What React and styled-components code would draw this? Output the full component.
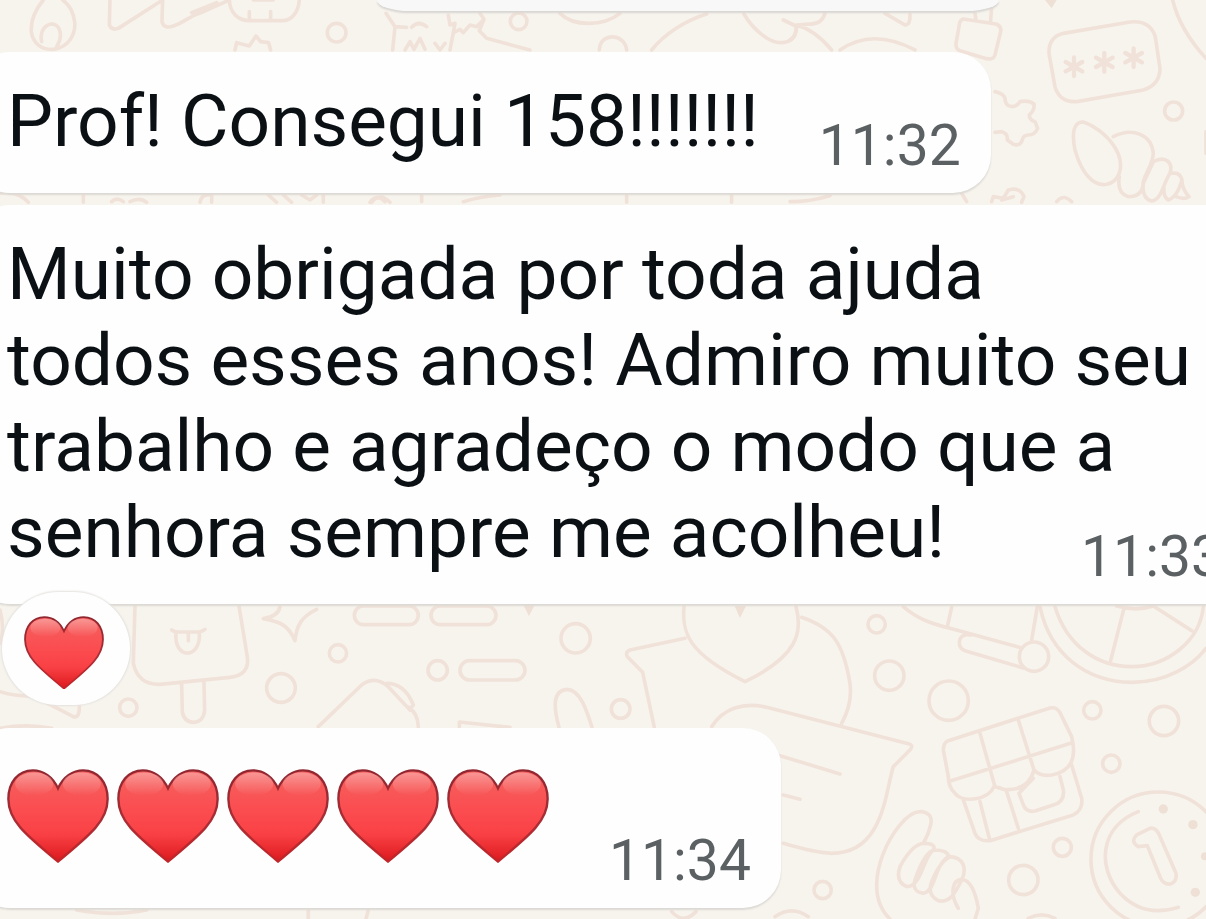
import React from "react";
import styled, { createGlobalStyle } from "styled-components";

const GlobalStyle = createGlobalStyle`
  body {
    margin: 0;
    background: #f7f4ee;
    font-family: Roboto, "Noto Sans", sans-serif;
    overflow: hidden;
  }
`;

const Screen = styled.main`
  position: relative;
  min-height: 100vh;
  overflow: hidden;
`;

const WallpaperSvg = styled.svg`
  position: absolute;
  inset: 0;
  width: 100%;
  height: 100%;
  overflow: visible;
  fill: none;
  stroke: #f1e2d9;
  stroke-width: 11;
  stroke-linecap: round;
  stroke-linejoin: round;

  .solid {
    fill: #efe0d6;
    stroke: none;
  }
`;

const Chat = styled.div`
  position: relative;
  display: flex;
  flex-direction: column;
  align-items: flex-start;
  margin-left: -28px;
`;

const DateChip = styled.div`
  box-sizing: border-box;
  width: 622px;
  height: 11px;
  margin: 0 0 41px 405px;
  background: #f8f8f9;
  border-radius: 0 0 36px 36px / 0 0 12px 12px;
  box-shadow: 0 2px 2px #d9d6d2;
`;

const Bubble = styled.article`
  position: relative;
  box-sizing: border-box;
  display: flex;
  align-items: flex-end;
  padding: ${(p) => p.$top}px 30px 17px 35px;
  margin-bottom: ${(p) => p.$after || 0}px;
  background: #fefefe;
  border-radius: 38px;
  box-shadow: 0 2px 2px #dcd9d4;
`;

const Message = styled.p`
  margin: 0 0 12px;
  font-size: 73px;
  line-height: 86px;
  color: #0b1014;
  white-space: nowrap;
`;

const Time = styled.time`
  margin-left: ${(p) => p.$gap}px;
  font-size: 57px;
  line-height: 60px;
  color: #5b6063;
  white-space: nowrap;
`;

const Reaction = styled.button`
  position: absolute;
  left: 30px;
  top: 387px;
  display: flex;
  align-items: center;
  justify-content: center;
  width: 128px;
  height: 113px;
  padding: 8px 4px 0 0;
  border: 0;
  border-radius: 57px;
  background: #fefefe;
  box-shadow: 0 0 2px 1px #e4e2de;
`;

const HeartRow = styled.div`
  display: flex;
  gap: 8px;
  margin-bottom: 28px;
`;

const HeartSvg = styled.svg`
  display: block;
  width: ${(p) => p.$width}px;
  height: auto;
`;

function Heart({ width }) {
  const shape =
    "M150 57C134 22 106 4 76 4C32 4 4 40 4 88C4 150 50 190 150 272C250 190 296 150 296 88C296 40 268 4 224 4C194 4 166 22 150 57Z";
  return (
    <HeartSvg $width={width} viewBox="0 0 300 276" role="img" aria-label="❤️">
      <defs>
        <linearGradient id="heartFill" x1="0" y1="0" x2="0" y2="1">
          <stop offset="0" stopColor="#f5625f" />
          <stop offset="0.45" stopColor="#fb4c50" />
          <stop offset="0.7" stopColor="#f94145" />
          <stop offset="1" stopColor="#dc191d" />
        </linearGradient>
        <linearGradient id="heartEdge" x1="0" y1="0" x2="0" y2="1">
          <stop offset="0" stopColor="#8f2630" />
          <stop offset="0.55" stopColor="#a92e35" />
          <stop offset="1" stopColor="#c32529" />
        </linearGradient>
        <linearGradient id="heartShine" x1="0" y1="0" x2="0" y2="1">
          <stop offset="0" stopColor="#fff" stopOpacity="0.34" />
          <stop offset="1" stopColor="#fff" stopOpacity="0" />
        </linearGradient>
      </defs>
      <path d={shape} fill="url(#heartFill)" stroke="url(#heartEdge)" strokeWidth="7" />
      <ellipse cx="80" cy="44" rx="56" ry="34" fill="url(#heartShine)" />
      <ellipse cx="220" cy="44" rx="56" ry="34" fill="url(#heartShine)" />
    </HeartSvg>
  );
}

const star = "M0-28V28M-25-14L25 14M-25 14L25-14";

function Wallpaper() {
  return (
    <WallpaperSvg aria-hidden="true">
      <g transform="scale(.3333)">
        <path d="M130 0C105 30 92 65 94 95C98 130 125 150 160 148C205 142 228 105 224 65C220 35 205 12 188 0M125 125C118 95 135 72 158 72C182 76 190 110 170 140" />
        <path d="M330 0L328 75Q335 92 355 85L488 0M488 0L486 65Q492 88 520 78C560 65 560 50 610 35L688 0M575 38L650 8M688 0C690 40 715 62 750 62H850C880 60 896 30 898 0M748 35V55M812 35V55M760 0H820" />
        <path d="M705 150L710 128L748 138L768 108L782 125L806 128L812 150" />
        <circle cx="1010" cy="98" r="28" />
        <path d="M0 580Q50 570 85 607M250 585V607M335 605Q350 590 370 605M390 605Q420 590 440 607M600 607Q605 580 635 585V607M805 585L830 607M850 585L875 607M905 585L930 600L950 585M970 607V585M1115 607Q1140 575 1170 607" />
      </g>
      <g transform="translate(370) scale(.3333)">
        <path d="M48 40L75 80L68 150M75 80L110 82M125 82Q145 60 170 80M235 45L240 75L255 70L250 98L240 150M105 150L120 125L132 148L150 115L165 148M195 130L210 150L225 130M250 98L270 88L280 98L300 75L320 80L342 58L330 40M342 58L328 92L350 115L480 150" />
        <circle cx="446" cy="64" r="25" />
        <path d="M570 40C610 80 700 80 750 40M688 150C690 95 765 100 770 150M845 150C885 100 950 60 1010 42M1122 42C1150 90 1200 130 1235 128C1270 125 1280 105 1278 78L1240 60M0 607Q20 580 45 605M155 585V605M280 605Q330 590 390 585M770 585V607M1085 585V607" />
      </g>
      <g transform="translate(790) scale(.3333)">
        <path d="M105 40Q95 75 55 72L20 75Q20 110 0 120M20 75Q75 90 125 150M150 150C215 105 290 105 375 150M285 40L345 75Q362 75 360 42M555 40L558 60M602 62L605 20M520 57Q508 62 508 75L498 130Q497 148 510 152L590 176Q610 180 615 165L632 95Q635 78 618 72Z" />
        <path className="solid" d="M765 0H800L785 25Z" />
        <path d="M1148 0Q1170 90 1248 175M820 100L1020 66Q1080 60 1096 110L1110 205Q1110 255 1060 270L865 304Q810 310 795 260L777 160Q775 112 820 100Z" />
        <path d={star} transform="translate(852 200)" strokeWidth="13" />
        <path d={star} transform="translate(943 187)" strokeWidth="13" />
        <path d={star} transform="translate(1031 173)" strokeWidth="13" />
        <circle cx="1151" cy="333" r="27" />
        <path d="M615 275Q640 280 645 295Q645 318 665 320Q680 320 690 305Q715 300 732 312Q735 330 718 345Q718 360 735 365L743 385Q735 405 715 405Q700 405 697 420Q690 440 670 433L652 420Q655 400 635 395L615 397" />
        <path d="M880 366C850 365 845 400 855 450C875 520 910 560 950 553C990 545 1000 500 985 462C965 415 920 380 880 366ZM970 410C1030 380 1085 405 1090 460C1088 495 1070 510 1060 545Q1060 590 1015 590Q980 580 988 530M1090 485C1130 465 1150 490 1140 520C1120 550 1115 600 1085 603Q1055 595 1060 550L1090 485M1145 520Q1170 515 1176 540C1168 565 1160 590 1135 600Q1120 590 1122 565M1176 540Q1175 565 1197 590Q1185 600 1158 590M1248 395V460M515 580L530 605M605 605L610 590L640 595L655 570Q690 560 702 590L695 607M635 600L670 590M800 605Q820 580 845 605M0 605Q60 605 120 587" />
      </g>
      <g transform="translate(0 570) scale(.3333)">
        <path d="M0 120Q15 180 0 220M0 365Q50 380 100 378L220 440Q240 445 238 405M0 475Q80 460 155 475" />
        <path d="M405 108L400 280Q415 345 480 343L690 322Q750 315 742 260L717 108M515 180Q522 186 535 186H595Q608 184 615 178M528 188C520 270 605 270 598 186M565 192V212M545 340L547 425Q552 457 582 457Q610 455 614 422L612 335" />
        <path d="M840 110Q835 140 790 146C840 155 865 165 885 212C890 165 905 140 950 118" />
        <circle cx="843" cy="354" r="43" />
        <circle cx="1014" cy="250" r="26" />
        <circle cx="385" cy="413" r="26" />
        <path d="M955 470L1085 345Q1125 315 1165 350L1230 420M230 1020Q340 1040 440 1020M925 1020V1047M1105 1020L1098 1047" />
      </g>
      <g transform="translate(340 590) scale(.3333)">
        <rect x="43" y="48" width="192" height="56" rx="28" />
        <rect x="273" y="48" width="195" height="56" rx="28" />
        <rect x="360" y="212" width="195" height="58" rx="29" />
        <path className="solid" d="M550 45H584L567 78Z" />
        <circle cx="707" cy="145" r="44" />
        <circle cx="293" cy="241" r="29" />
        <circle cx="842" cy="357" r="28" />
        <path d="M140 280Q195 280 220 345Q215 355 205 352M205 352Q235 370 235 412M358 410V396L510 412M657 412C640 350 638 302 680 298C720 298 740 360 756 412" />
      </g>
      <g transform="translate(620 590) scale(.3333)">
        <path d="M192 50C185 130 205 190 375 275C530 200 550 130 528 50M195 145L30 180Q15 185 22 200L68 247L103 412M545 82C640 115 670 160 690 280Q698 340 665 400M275 410C310 355 370 335 440 352L868 462Q880 465 872 478L820 530C795 610 790 790 635 790C590 788 540 775 490 760M480 497L660 552M490 615L540 628" />
        <path className="solid" d="M344 48H378L360 84Z" />
        <circle cx="770" cy="103" r="26" />
        <circle cx="808" cy="257" r="44" />
        <circle cx="608" cy="900" r="26" />
        <path d="M155 965Q190 1005 228 965M465 980Q515 945 565 980" />
      </g>
      <g transform="translate(900 590) scale(.3333)">
        <path d="M10 50C50 85 90 100 150 115L358 172M155 52L142 110M212 135Q180 130 178 158Q178 175 195 182L370 234M412 50L395 150" />
        <circle cx="402" cy="200" r="44" />
        <path d="M420 50C450 195 560 275 695 277C800 278 880 225 918 175M465 50C500 165 590 230 695 230C800 230 900 155 910 50M672 55L632 212M650 48Q710 65 760 48L875 122" />
        <circle cx="146" cy="332" r="59" />
        <circle cx="577" cy="361" r="26" />
        <circle cx="792" cy="393" r="44" />
        <circle cx="634" cy="521" r="26" />
        <circle cx="487" cy="772" r="27" />
        <circle cx="370" cy="870" r="44" />
        <path d="M145 452L450 354Q470 350 480 368L515 440Q540 540 455 555Q420 560 402 540Q385 605 310 598Q290 590 282 590C265 630 190 640 165 610Q145 590 145 560L130 480Q130 458 145 452ZM240 430L285 590M355 390L402 540M148 574L512 460M190 630L225 730Q235 755 270 752L520 675Q550 660 545 625L515 525M240 635L268 745M320 605L355 715M357 610L370 645Q378 668 405 663L460 645Q495 635 490 600L480 560M357 610L400 565" />
        <circle cx="775" cy="808" r="202" />
        <path d="M715 665C600 710 590 830 660 910Q730 985 835 952M710 735L750 715Q768 712 778 735L828 850Q832 875 812 882Q792 885 782 865L742 767L715 770Q690 755 710 735Z" />
        <circle className="solid" cx="790" cy="657" r="14" />
        <circle className="solid" cx="879" cy="704" r="14" />
        <circle className="solid" cx="915" cy="799" r="12" />
        <circle className="solid" cx="886" cy="907" r="14" />
        <path d="M-30 987C-90 930-70 840-50 790C-30 740 20 660 65 665Q100 670 92 705Q85 735 70 760M70 760Q110 760 100 780C70 800 65 890 20 890Q-15 875 0 830Q35 765 70 760M100 780Q145 780 145 800C100 830 110 900 70 910Q35 905 45 870Q75 780 105 780M145 800C195 800 200 840 185 870C165 910 150 940 115 932Q80 915 95 875Q120 815 150 800M175 955C150 915 155 870 185 868Q220 870 235 955L225 987M385 985Q425 965 465 985" />
      </g>
    </WallpaperSvg>
  );
}

export default function App() {
  return (
    <>
      <GlobalStyle />
      <Screen>
        <Wallpaper />
        <Chat>
          <DateChip />
          <Bubble $top={26} $after={12}>
            <Message>Prof! Consegui 158!!!!!!!</Message>
            <Time $gap={60}>11:32</Time>
          </Bubble>
          <Bubble $top={26} $after={124}>
            <Message>
              Muito obrigada por toda ajuda
              <br />
              todos esses anos! Admiro muito seu
              <br />
              trabalho e agradeço o modo que a
              <br />
              senhora sempre me acolheu!
            </Message>
            <Time $gap={-110}>11:33</Time>
            <Reaction type="button" aria-label="❤️">
              <Heart width={80} />
            </Reaction>
          </Bubble>
          <Bubble $top={41}>
            <HeartRow>
              {[0, 1, 2, 3, 4].map((n) => (
                <Heart key={n} width={102} />
              ))}
            </HeartRow>
            <Time $gap={60}>11:34</Time>
          </Bubble>
        </Chat>
      </Screen>
    </>
  );
}
